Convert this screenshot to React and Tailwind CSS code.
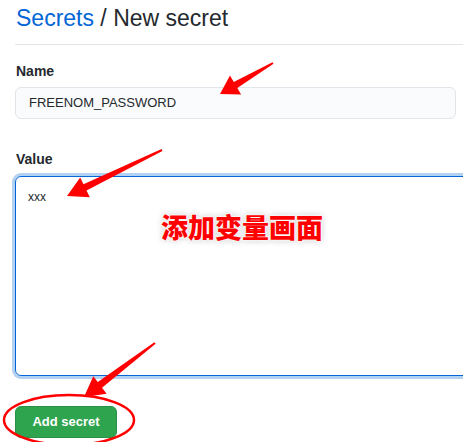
import React from "react";

// red arrow from tail to tip: thin tapered shaft plus a wide head
function arrowPoints([tx, ty], [px, py], head = 20, headW = 11, shaftW = 4) {
  const dx = px - tx;
  const dy = py - ty;
  const len = Math.hypot(dx, dy);
  const ux = dx / len;
  const uy = dy / len;
  const nx = -uy;
  const ny = ux;
  const bx = px - ux * head;
  const by = py - uy * head;
  const pts = [
    [tx + nx * 1, ty + ny * 1],
    [bx + nx * shaftW, by + ny * shaftW],
    [bx + nx * headW, by + ny * headW],
    [px, py],
    [bx - nx * headW, by - ny * headW],
    [bx - nx * shaftW, by - ny * shaftW],
    [tx - nx * 1, ty - ny * 1],
  ];
  return pts.map(p => p.join(",")).join(" ");
}

export default function App() {
  return (
    <div className="relative w-[463px] h-[442px] overflow-hidden bg-white text-[#24292e] font-['Liberation_Sans',Arial,sans-serif]">
      <div className="pl-[15px] w-[620px]">

        {/* Header */}
        <div className="border-b border-[#e1e4e8] pb-[8px]">
          <h2 className="text-[23px] leading-[36px] pl-px">
            <span className="text-[#0366d6]">Secrets</span> / New secret
          </h2>
        </div>

        {/* Form */}
        <div className="mt-[16px] pl-px text-[14px] font-bold leading-[21px]">Name</div>
        <div className="mt-[5px] w-[441px] h-[32px] rounded-[6px] border border-[#e1e4e8] bg-[#fafbfc] pl-[13px] flex items-center text-[13px]">
          FREENOM_PASSWORD
        </div>

        <div className="mt-[30px] pl-px text-[14px] font-bold leading-[21px]">Value</div>
        <div className="mt-[6px] h-[200px] rounded-[6px] border border-[#0366d6] shadow-[0_0_0_3px_rgba(3,102,214,0.3)] px-[12px] pt-[10px] text-[12px] leading-[20px]">
          xxx
        </div>

        <button className="mt-[30px] h-[32px] w-[102px] rounded-[6px] border border-[#2a9147] bg-[#2ea44f] text-white text-[13px] font-bold">
          Add secret
        </button>
      </div>

      {/* Annotations */}
      <svg className="absolute inset-0 pointer-events-none" width="463" height="442">
        <polygon points={arrowPoints([273, 63], [220, 94], 18, 11, 3.5)} fill="#ff0000" />
        <polygon points={arrowPoints([162, 150], [67, 196], 20, 11, 3.5)} fill="#ff0000" />
        <polygon points={arrowPoints([155, 343], [84, 397], 20, 11, 3.5)} fill="#ff0000" />
        <ellipse cx="69" cy="420" rx="65" ry="25" fill="none" stroke="#ff0000" strokeWidth="2.5" />
      </svg>

      <div className="absolute left-[161px] top-[213px] text-[27px] leading-none font-black text-[#ff0000] font-['Noto_Sans_CJK_SC',sans-serif] [text-shadow:0_0_1px_#fff,0_0_3px_#fff,0_0_4px_#fff,0_0_6px_#aaa]">
        添加变量画面
      </div>
    </div>
  );
}
